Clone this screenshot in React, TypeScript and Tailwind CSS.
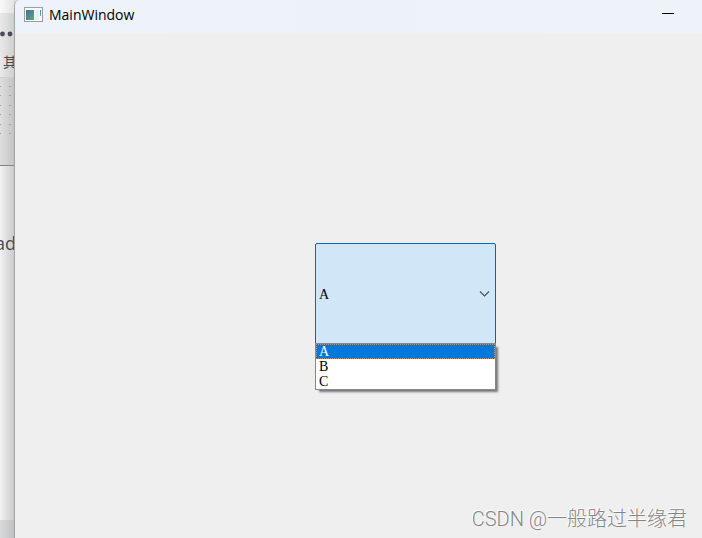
import React, { useState } from 'react';

const options = ['A', 'B', 'C'];

const dotRows = [0, 1, 2, 3, 4, 5];

function BackgroundApp() {
  return (
    <aside className="w-[14px] shrink-0 flex flex-col overflow-hidden bg-linear-to-r from-[#ebebeb] to-[#c9c9c9]">
      <div className="h-[13px] bg-linear-to-r from-[#fafafa] to-[#e2e2e2]" />
      <div className="h-[65px] border-b border-[#cfcfcf] bg-linear-to-r from-[#e9e9e9] to-[#d0d0d0]">
        <svg className="mt-[18px]" width="14" height="6" viewBox="0 0 14 6" fill="#4b4a5c">
          <circle cx="2.5" cy="3" r="2.4" />
          <circle cx="10" cy="3" r="2.4" />
        </svg>
        <div className="pl-[3px] pt-[14px] text-[14px] leading-[20px] whitespace-nowrap text-[#4a4a4a] font-['Noto_Sans_CJK_SC',sans-serif]">
          其
        </div>
      </div>
      <div className="h-[88px] border-b border-[#858585] bg-linear-to-r from-[#dedede] to-[#c4c4c4]">
        <svg width="14" height="60" viewBox="0 0 14 60" fill="#a3a3a3">
          {dotRows.map((row) => (
            <g key={row}>
              <rect x="0" y={Math.round(8 + row * 9.4)} width="1" height="1" />
              <rect x="9" y={Math.round(8 + row * 9.4)} width="2" height="1" />
            </g>
          ))}
        </svg>
      </div>
      <div className="flex-1 bg-linear-to-r from-[#f2f2f2] to-[#cbcbcb]">
        <div className="-ml-[5px] pt-[64px] text-[18px] leading-[26px] whitespace-nowrap text-[#474959] font-['Open_Sans',sans-serif]">
          ad
        </div>
      </div>
      <div className="h-[18px] bg-linear-to-r from-[#d9dadb] to-[#bfc1c2]" />
    </aside>
  );
}

function WindowIcon() {
  return (
    <svg width="19" height="16" viewBox="0 0 19 16">
      <defs>
        <linearGradient id="screen" x1="0" y1="0" x2="1" y2="1">
          <stop offset="0" stopColor="#3e6fa0" />
          <stop offset="1" stopColor="#5aa97c" />
        </linearGradient>
        <linearGradient id="bar" x1="0" y1="0" x2="0" y2="1">
          <stop offset="0" stopColor="#3f86c0" />
          <stop offset="1" stopColor="#5fc28e" />
        </linearGradient>
      </defs>
      <rect x="0.5" y="0.5" width="18" height="14" fill="#f8f9fa" stroke="#9a9ea3" />
      <rect x="2" y="3" width="8" height="10" fill="url(#screen)" />
      <rect x="11" y="3" width="4" height="10" fill="#eceeef" />
      <rect x="16" y="3" width="1" height="6" fill="url(#bar)" />
    </svg>
  );
}

function TitleBar() {
  return (
    <header className="h-[33px] flex items-start justify-between pl-[9px] pr-[28px] bg-linear-to-r from-[#eef2fb] to-[#edf3f8]">
      <div className="flex items-center gap-[6px] pt-[4px]">
        <WindowIcon />
        <h1 className="text-[14px] leading-[22px] text-black font-['Open_Sans',sans-serif]">MainWindow</h1>
      </div>
      <button type="button" aria-label="Minimize" className="h-[27px] flex items-center">
        <svg width="12" height="1" viewBox="0 0 12 1">
          <rect width="12" height="1" fill="#000" />
        </svg>
      </button>
    </header>
  );
}

function ComboBox() {
  const [value, setValue] = useState('A');

  return (
    <div className="relative w-[181px] text-[14px] text-black font-['Liberation_Serif',serif]">
      <select
        aria-label="Option"
        value={value}
        onChange={(e) => setValue(e.target.value)}
        className="block w-full h-[102px] appearance-none rounded-[2px] border border-[#0067c0] bg-[#d1e6f7] pl-[3px] outline-none"
      >
        {options.map((option) => (
          <option key={option}>{option}</option>
        ))}
      </select>
      <svg
        className="absolute right-[6px] top-1/2 -translate-y-1/2 pointer-events-none"
        width="11"
        height="7"
        viewBox="0 0 11 7"
        fill="none"
        stroke="#4c555c"
        strokeWidth="1.2"
      >
        <path d="M1 1l4.5 4.5L10 1" />
      </svg>
      <ul
        role="listbox"
        aria-label="Options"
        className="absolute left-0 right-0 top-[100px] border border-[#828790] bg-white shadow-[3px_3px_2px_-1px_#777777]"
      >
        {options.map((option) => (
          <li
            key={option}
            role="option"
            aria-selected={option === value}
            onClick={() => setValue(option)}
            className={
              option === value
                ? 'h-[15px] pl-[2px] leading-[13px] bg-[#0078d7] text-white border border-dotted border-[#c98d62]'
                : 'h-[15px] pl-[3px] leading-[15px]'
            }
          >
            {option}
          </li>
        ))}
      </ul>
    </div>
  );
}

export default function App() {
  return (
    <div className="relative min-h-screen flex overflow-hidden bg-[#d9d9d9]">
      <BackgroundApp />
      <div className="flex-1 flex flex-col overflow-hidden rounded-tl-[6px] border-l border-[#a3a3a3] bg-[#efefef]">
        <TitleBar />
        <main className="flex-1 pl-[300px] pt-[210px]">
          <ComboBox />
        </main>
      </div>
      <p className="absolute right-[15px] bottom-[5px] text-[20px] leading-[28px] font-light whitespace-nowrap text-[#858585] [text-shadow:-1px_-1px_0_#ffffff] font-['Roboto','Noto_Sans_CJK_SC',sans-serif]">
        CSDN @一般路过半缘君
      </p>
    </div>
  );
}
